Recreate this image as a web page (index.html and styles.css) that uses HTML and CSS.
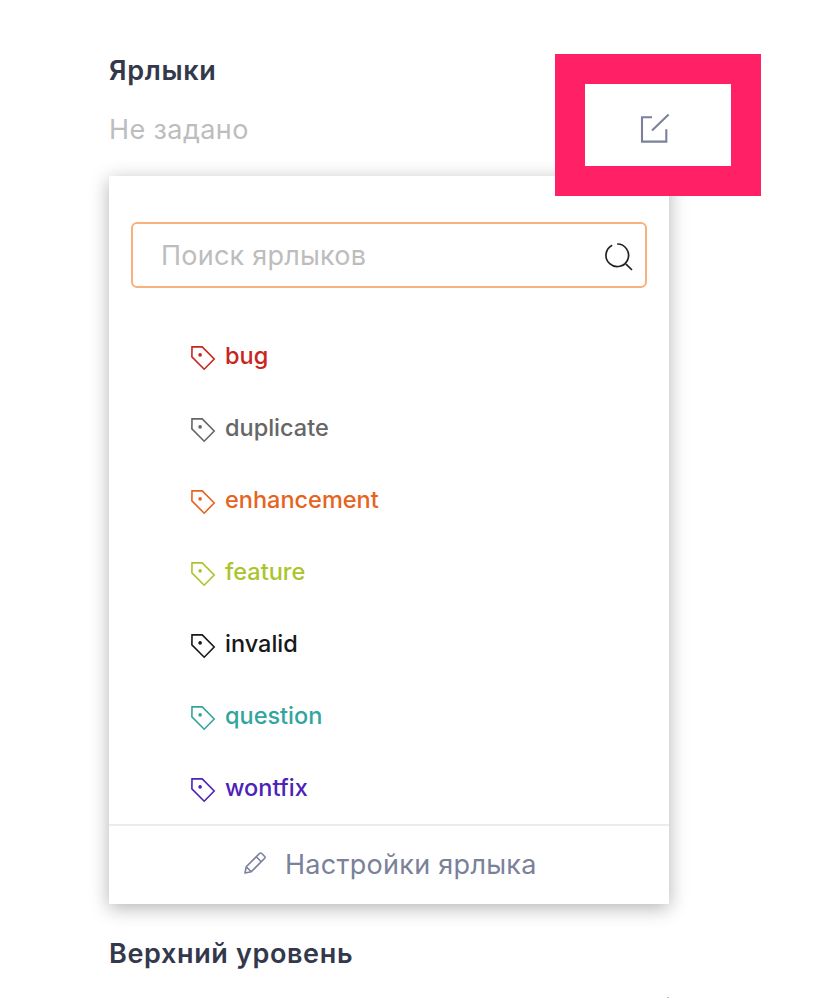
FILE: index.html
```html
<!DOCTYPE html>
<html lang="ru">
<head>
<meta charset="utf-8">
<title>Ярлыки</title>
<link rel="stylesheet" href="styles.css">
</head>
<body>
<svg class="sprite" aria-hidden="true">
  <symbol id="tag" viewBox="0 0 26 26"><path d="M2 1.9H12.2L24.2 14 14.2 24.2 1.9 11.9Z" fill="none" stroke="currentColor" stroke-width="1.6"/><circle cx="10.1" cy="9.9" r="1.8" fill="currentColor"/></symbol>
</svg>
<main class="sidebar">
  <header class="field-head">
    <h2 class="title">Ярлыки</h2>
    <p class="empty">Не задано</p>
    <button class="highlight" aria-label="Изменить">
      <svg class="edit-icon" viewBox="0 0 32 32"><path d="M14 4.2H4V28.6H28.3V16.2M14 17.6 30.6 1.6" fill="none" stroke="currentColor" stroke-width="2.1"/></svg>
    </button>
  </header>
  <section class="card">
    <div class="search">
      <span class="placeholder">Поиск ярлыков</span>
      <svg class="search-icon" viewBox="0 0 30 30"><path d="M13.2 2A11.3 11.3 0 1 1 8.2 3.2M22 22.1 28 28" fill="none" stroke="currentColor" stroke-width="1.7"/></svg>
    </div>
    <ul class="labels">
      <li class="label red"><svg class="tag"><use href="#tag"/></svg><span class="name">bug</span></li>
      <li class="label gray"><svg class="tag"><use href="#tag"/></svg><span class="name">duplicate</span></li>
      <li class="label orange"><svg class="tag"><use href="#tag"/></svg><span class="name">enhancement</span></li>
      <li class="label lime"><svg class="tag"><use href="#tag"/></svg><span class="name">feature</span></li>
      <li class="label black"><svg class="tag"><use href="#tag"/></svg><span class="name">invalid</span></li>
      <li class="label teal"><svg class="tag"><use href="#tag"/></svg><span class="name">question</span></li>
      <li class="label violet"><svg class="tag"><use href="#tag"/></svg><span class="name">wontfix</span></li>
    </ul>
    <footer class="settings">
      <svg class="pencil" viewBox="0 0 24 24"><path d="M2 22 3.2 15.8 16.7 2.3Q17.6 1.6 18.5 2.3L21.7 5.5Q22.4 6.4 21.7 7.3L8.2 20.8ZM13.3 5.8 18.2 10.7M3.2 15.8 8.2 20.8" fill="none" stroke="currentColor" stroke-width="1.6" stroke-linejoin="round"/></svg>
      <span class="settings-text">Настройки ярлыка</span>
    </footer>
  </section>
  <h2 class="title next">Верхний уровень</h2>
  <div class="next-action"></div>
</main>
</body>
</html>
```
FILE: styles.css
```css
* { box-sizing: border-box; }
body {
  margin: 0;
  height: 998px;
  overflow: hidden;
  background: #fff;
  font-family: Inter, "Liberation Sans", sans-serif;
}
h2, p, ul { margin: 0; padding: 0; }
svg { display: block; flex: none; }
.sprite { position: absolute; width: 0; height: 0; }
.sidebar { width: 560px; margin-left: 109px; }
.field-head { position: relative; height: 176px; padding-top: 51px; }
.title {
  font-size: 27px;
  line-height: 40px;
  font-weight: 600;
  letter-spacing: .64px;
  color: #33384c;
  white-space: nowrap;
}
.empty {
  margin-top: 19px;
  font-size: 27px;
  line-height: 40px;
  letter-spacing: .4px;
  color: #bdbdbd;
}
.highlight {
  position: absolute;
  z-index: 1;
  left: 446px;
  top: 54px;
  width: 206px;
  height: 142px;
  padding: 0 0 0 53px;
  border: 30px solid #ff2066;
  background: #fff;
  color: #7a8199;
}
.edit-icon { width: 32px; height: 32px; margin-top: 7px; }
.card {
  height: 728px;
  padding-top: 46px;
  background: #fff;
  box-shadow: 0 4px 18px rgba(0, 0, 0, .3);
}
.search {
  display: flex;
  align-items: center;
  justify-content: space-between;
  width: 516px;
  height: 66px;
  margin: 0 22px;
  padding: 0 11px 0 28px;
  border: 2px solid #f8b07c;
  border-radius: 6px;
  font-size: 27px;
  letter-spacing: .22px;
  color: #bdbdbd;
}
.placeholder { padding-top: 1px; }
.search-icon { width: 30px; height: 30px; margin-top: 3px; color: #222; }
.labels { margin-top: 32px; list-style: none; }
.label {
  display: flex;
  align-items: center;
  gap: 9px;
  height: 72px;
  padding-left: 81px;
  font-size: 23.5px;
  font-weight: 500;
}
.name { line-height: 28px; padding-bottom: 1px; }
.tag { width: 26px; height: 26px; margin-top: 3px; }
.red { color: #c9241d; }
.gray { color: #666; }
.orange { color: #e66320; }
.lime { color: #aac52c; }
.black { color: #181818; }
.teal { color: #32a59f; }
.violet { color: #4c22b9; }
.settings {
  display: flex;
  align-items: center;
  height: 80px;
  padding-left: 134px;
  border-top: 2px solid #ebebeb;
  font-size: 27px;
  letter-spacing: .28px;
  color: #7a8199;
}
.settings-text { padding-bottom: 2px; }
.pencil { width: 24px; height: 24px; margin: 0 18px 4px 0; }
.next { margin-top: 30px; }
.next-action {
  width: 2px;
  height: 1px;
  margin: 23px 0 0 auto;
  background: #bbb;
}
```
